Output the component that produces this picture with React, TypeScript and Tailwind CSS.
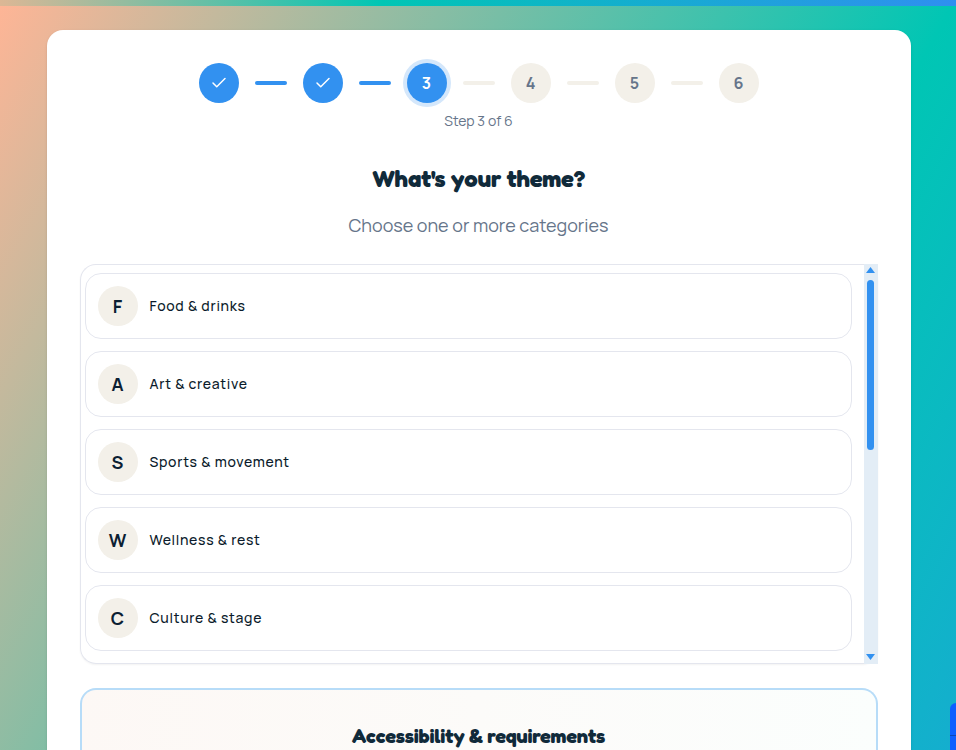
import { Check } from "lucide-react";

const categories = [
  { letter: "F", label: "Food & drinks" },
  { letter: "A", label: "Art & creative" },
  { letter: "S", label: "Sports & movement" },
  { letter: "W", label: "Wellness & rest" },
  { letter: "C", label: "Culture & stage" },
];

function Step({ n, state }: { n: number; state: "done" | "current" | "todo" }) {
  if (state === "done") {
    return (
      <div className="flex h-10 w-10 items-center justify-center rounded-full bg-[#3291f0] text-white">
        <Check size={18} strokeWidth={2} />
      </div>
    );
  }
  if (state === "current") {
    return (
      <div className="flex h-10 w-10 items-center justify-center rounded-full bg-[#3291f0] text-base font-bold text-white shadow-[0_0_0_4px_#d4e7fb]">
        {n}
      </div>
    );
  }
  return (
    <div className="flex h-10 w-10 items-center justify-center rounded-full bg-[#f3f0e9] text-base font-bold text-[#66758a]">
      {n}
    </div>
  );
}

function Stepper() {
  const steps = [1, 2, 3, 4, 5, 6];
  return (
    <div className="flex items-center justify-center">
      {steps.map((n, i) => (
        <div key={n} className="flex items-center">
          <Step n={n} state={n < 3 ? "done" : n === 3 ? "current" : "todo"} />
          {i < steps.length - 1 && (
            <div className={`mx-4 h-1 w-8 rounded-full ${n < 3 ? "bg-[#3291f0]" : "bg-[#f3f0e9]"}`} />
          )}
        </div>
      ))}
    </div>
  );
}

export default function App() {
  return (
    <div className="h-[750px] overflow-hidden bg-[linear-gradient(to_bottom_right,#ffb596_0%,#00c6b4_50%,#2f8ff0_100%)] bg-size-[100%_1700px] font-['Manrope','Inter',sans-serif]">
      <div className="h-1.5 bg-[linear-gradient(90deg,#dcb795_0%,#00c6b4_40%,#2f8ff0_100%)]" />
      <div className="mt-6 ml-[46.5px] w-[864px] rounded-t-2xl bg-white px-[33px] pt-[33px] shadow-sm">
        <Stepper />
        <p className="mt-2 text-center text-sm leading-5 text-[#66758a]">Step 3 of 6</p>
        <h1 className="mt-8 text-center font-['Fredoka','Nunito','Lato',sans-serif] text-2xl leading-8 font-black tracking-[-0.01em] text-[#102a3a]">
          What's your theme?
        </h1>
        <p className="mt-4 text-center text-lg leading-7 text-[#66758a]">Choose one or more categories</p>

        <div className="mt-[25px] flex h-[400px] rounded-2xl shadow-[0_1px_2px_rgba(0,0,0,0.05)]">
          <div className="flex flex-1 flex-col gap-3 overflow-hidden rounded-l-2xl border border-r-0 border-[#e4e6ee] py-2 pr-3 pl-1">
            {categories.map((c) => (
              <div key={c.letter} className="flex h-[66px] shrink-0 items-center gap-3 rounded-2xl border border-[#e4e6ee] px-3">
                <div className="flex h-10 w-10 items-center justify-center rounded-full bg-[#f3f0e9] text-lg font-bold text-[#0b2033]">
                  {c.letter}
                </div>
                <span className="text-sm font-medium tracking-[0.7px] text-[#0b1b2b]">{c.label}</span>
              </div>
            ))}
          </div>
          <div className="flex w-[14px] shrink-0 flex-col items-center bg-[#e3edf6]">
            <svg width="13" height="13" viewBox="0 0 13 13" className="shrink-0">
              <path d="M6.5 3 L11 9 H2 Z" fill="#3291f0" />
            </svg>
            <div className="mt-[3px] h-[170px] w-[7px] rounded-full bg-[#3291f0]" />
            <svg width="13" height="13" viewBox="0 0 13 13" className="mt-auto shrink-0">
              <path d="M2 3 H11 L6.5 9 Z" fill="#3291f0" />
            </svg>
          </div>
        </div>

        <div className="mt-6 rounded-t-2xl border-2 border-b-0 border-[#b7dcf8] bg-[linear-gradient(to_right,#fdf8f5,#fbfefd)] pt-8">
          <h2 className="text-center font-['Fredoka','Nunito','Lato',sans-serif] text-xl leading-7 font-black tracking-[-0.01em] text-[#102a3a]">
            Accessibility &amp; requirements
          </h2>
        </div>
      </div>
      <div className="fixed right-0 bottom-0 flex h-[47px] w-[6px] flex-col rounded-tl-md bg-[#0d5fff]">
        <div className="mt-[32px] h-px bg-[#0b47b8]" />
      </div>
    </div>
  );
}
